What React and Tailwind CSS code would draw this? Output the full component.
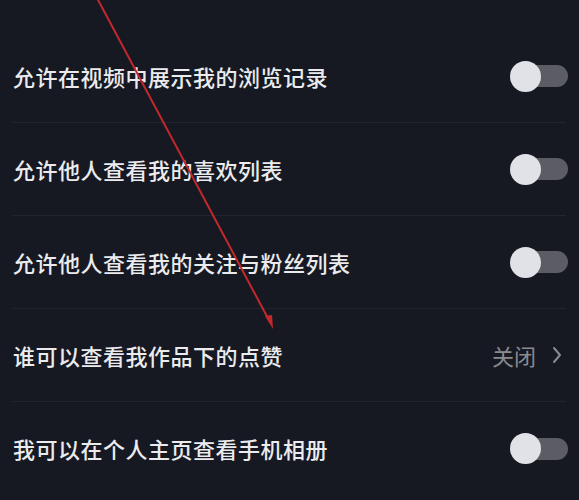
import React from "react";

function Toggle() {
  return (
    <div className="relative w-[58px] h-[32px] flex items-center">
      <div className="absolute right-0 w-[48px] h-[22px] rounded-full bg-[#5b5c64]" />
      <div className="absolute left-0 w-[31px] h-[31px] rounded-full bg-[#e1e2e8]" />
    </div>
  );
}

const rows = [
  { t: "允许在视频中展示我的浏览记录", type: "toggle" },
  { t: "允许他人查看我的喜欢列表", type: "toggle" },
  { t: "允许他人查看我的关注与粉丝列表", type: "toggle" },
  { t: "谁可以查看我作品下的点赞", type: "link" },
  { t: "我可以在个人主页查看手机相册", type: "toggle" },
];

export default function App() {
  return (
    <div
      className="relative w-[579px] h-[500px] overflow-hidden bg-[#161922] pt-[30px]"
      style={{ fontFamily: '"Noto Sans CJK SC", "Noto Sans", sans-serif' }}
    >
      {rows.map((r, i) => (
        <div
          key={i}
          className={
            i < rows.length - 1
              ? "mx-[13px] h-[93px] flex items-center justify-between border-b border-[#22252e]"
              : "mx-[13px] h-[93px] flex items-center justify-between"
          }
        >
          <span className="text-[22px] font-medium text-[#ebebee] tracking-[0.5px]">{r.t}</span>
          {r.type === "toggle" ? (
            <div className="mr-[-2px]">
              <Toggle />
            </div>
          ) : (
            <div className="flex items-center gap-[16px] mr-[4px]">
              <span className="text-[22px] text-[#8a8b91]">关闭</span>
              <svg width="10" height="18" viewBox="0 0 10 18" fill="none">
                <path d="M2 2 L8 9 L2 16" stroke="#8a8b91" strokeWidth="2" strokeLinecap="round" strokeLinejoin="round" />
              </svg>
            </div>
          )}
        </div>
      ))}
      <svg className="absolute inset-0 pointer-events-none" width="579" height="500" viewBox="0 0 579 500">
        <line x1="97" y1="-2" x2="270" y2="322" stroke="#c4282c" strokeWidth="2" />
        <polygon points="273,329 265,316 272,315" fill="#c4282c" />
      </svg>
    </div>
  );
}
